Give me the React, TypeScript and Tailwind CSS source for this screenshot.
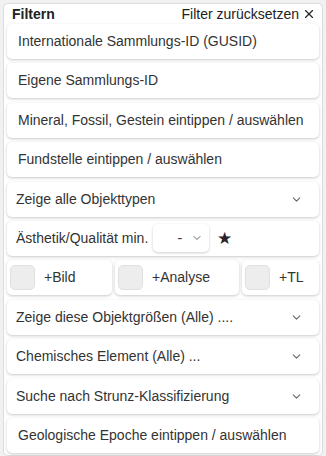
import { ChevronDown, X } from "lucide-react";

const font = { fontFamily: '"Liberation Sans", Arial, sans-serif' };

const card = "h-[35px] rounded-[5px] bg-white shadow-[0_1px_3px_rgba(0,0,0,0.22)]";

const TextBox = ({ label }: { label: string }) => (
  <div className={`${card} flex items-center pl-[11px] text-[14px] text-[#333]`}>{label}</div>
);

const SelectBox = ({ label }: { label: string }) => (
  <div className={`${card} flex items-center justify-between pl-[9px] pr-[16px] text-[14px] text-[#333]`}>
    <span>{label}</span>
    <ChevronDown size={13} strokeWidth={2} className="text-[#666]" />
  </div>
);

const Check = ({ label, className }: { label: string; className: string }) => (
  <div className={`${card} flex items-center pl-[3px] text-[14px] text-[#333] ${className}`}>
    <span className="h-[25px] w-[25px] rounded-[5px] border border-[#e0e0e0] bg-[#ededed]" />
    <span className="ml-[9px]">{label}</span>
  </div>
);

export default function App() {
  return (
    <div className="h-[456px] w-[326px] bg-[#f1f1f1] pt-[3px]" style={font}>
      <div className="mx-[3px] rounded-[5px] border border-[#dcdcdc] bg-white px-[3px] pb-[2px]">
        <div className="flex h-[20px] items-center justify-between pl-[5px] pr-[3px] text-[14px] text-[#222]">
          <span className="font-bold">Filtern</span>
          <span className="flex items-center gap-[3px]">
            Filter zurücksetzen
            <X size={14} strokeWidth={2} />
          </span>
        </div>
        <div className="flex flex-col gap-[4.4px]">
          <TextBox label="Internationale Sammlungs-ID (GUSID)" />
          <TextBox label="Eigene Sammlungs-ID" />
          <TextBox label="Mineral, Fossil, Gestein eintippen / auswählen" />
          <TextBox label="Fundstelle eintippen / auswählen" />
          <SelectBox label="Zeige alle Objekttypen" />
          <div className={`${card} flex items-center pl-[9px] text-[14px] text-[#333]`}>
            <span>Ästhetik/Qualität min.</span>
            <span className="ml-[5px] flex h-[28px] w-[56px] items-center justify-end gap-[9px] rounded-[5px] bg-white pr-[6px] shadow-[0_1px_3px_rgba(0,0,0,0.2)]">
              <span>-</span>
              <ChevronDown size={12} strokeWidth={2} className="text-[#666]" />
            </span>
            <span className="ml-[8px] text-[17px] text-[#2a2226]">★</span>
          </div>
          <div className="flex gap-[3px]">
            <Check label="+Bild" className="w-[105px]" />
            <Check label="+Analyse" className="w-[124px]" />
            <Check label="+TL" className="flex-1" />
          </div>
          <SelectBox label="Zeige diese Objektgrößen (Alle) ...." />
          <SelectBox label="Chemisches Element (Alle) ..." />
          <SelectBox label="Suche nach Strunz-Klassifizierung" />
          <TextBox label="Geologische Epoche eintippen / auswählen" />
        </div>
      </div>
    </div>
  );
}
